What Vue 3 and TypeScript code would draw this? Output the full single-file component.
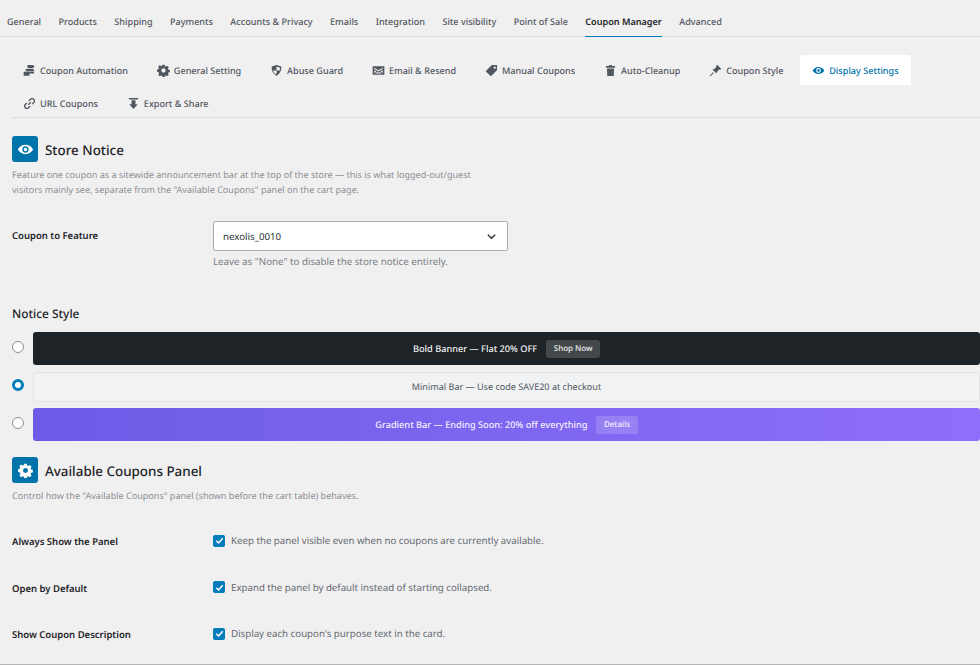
<script setup lang="ts">
const mainTabs = [
  'General', 'Products', 'Shipping', 'Payments', 'Accounts & Privacy', 'Emails',
  'Integration', 'Site visibility', 'Point of Sale', 'Coupon Manager', 'Advanced',
]

const gear =
  'M8.300 1h3.400l.5 2.400 1.500.6 2-1.300 2.400 2.400-1.300 2 .6 1.500 2.400.5v3.400l-2.400.5-.6 1.500 1.300 2-2.400 2.400-2-1.300-1.500.6-.5 2.400H8.300l-.5-2.400-1.500-.6-2 1.300-2.400-2.400 1.300-2-.6-1.500L0 11.700V8.300l2.400-.5.6-1.500-1.300-2 2.400-2.400 2 1.300 1.500-.6zM10 6.700a3.300 3.300 0 100 6.600 3.300 3.300 0 000-6.600z'
const eye =
  'M10 4.500c-4 0-7.200 2.400-9 5.500 1.800 3.100 5 5.500 9 5.500s7.200-2.400 9-5.500c-1.800-3.100-5-5.500-9-5.500zm0 9.200a3.700 3.700 0 110-7.400 3.700 3.700 0 010 7.400zm0-5.800a2.100 2.100 0 100 4.200 2.100 2.100 0 000-4.200z'

const subTabs = [
  { label: 'Coupon Automation', icon: 'M7 1.500h8l3 2.500-3 2.500H7zM4 7.500h12l1.500 3.500H4.500zM1 12h16v2.500H10V18H1z' },
  { label: 'General Setting', icon: gear },
  { label: 'Abuse Guard', icon: 'M10 1.500l7.500 2.500c0 6.500-2 11-7.500 14.500C4.500 15 2.500 10.500 2.500 4zm0 2.200V10H5c.4 2.700 2 5 5 6.300V10h5c.2-1.300.3-2.600.3-4.400z' },
  { label: 'Email & Resend', icon: 'M1 3.500h18v13H1zm2.500 2.300V7.500L10 11.500l6.500-4V5.800L10 9.700zm0 3.700v4.300L7 11.600zm13 0L13 11.600l3.500 2.200zM4.500 14.500h11L11.800 12.400 10 13.500l-1.800-1.100z' },
  { label: 'Manual Coupons', icon: 'M10.500 1.500H18.500v8L9 19 1 11zm4.500 2.200a1.800 1.800 0 100 3.600 1.800 1.800 0 000-3.600z' },
  { label: 'Auto-Cleanup', icon: 'M8 1.500h4l.5 1.500H17v2.800H3V3h4.500zM4.500 7h11L15 18.500H5z' },
  { label: 'Coupon Style', icon: 'M12.500 1l6.500 6.500-2 1.500-1.200-.5-3.300 3.300-.8 3-6.500-6.500 3-.8 3.300-3.300-.5-1.200zM6 12.500l1.500 1.500-5.500 5-1-1z' },
  { label: 'Display Settings', icon: eye, active: true },
  { label: 'URL Coupons', icon: 'M8 12l4-4M9 6l2.500-2.500a3.500 3.500 0 015 5L14 11M11 14l-2.500 2.500a3.500 3.500 0 01-5-5L6 9', line: true },
  { label: 'Export & Share', icon: 'M3 1.500h14v2.500H3zM7 5h6v6h3.500L10 18.500 3.500 11H7z' },
]

const notices = [
  { kind: 'bold', text: 'Bold Banner — Flat 20% OFF', action: 'Shop Now', checked: false },
  { kind: 'minimal', text: 'Minimal Bar — Use code SAVE20 at checkout', action: '', checked: true },
  { kind: 'gradient', text: 'Gradient Bar — Ending Soon: 20% off everything', action: 'Details', checked: false },
]

const panelRows = [
  { label: 'Always Show the Panel', text: 'Keep the panel visible even when no coupons are currently available.' },
  { label: 'Open by Default', text: 'Expand the panel by default instead of starting collapsed.' },
  { label: 'Show Coupon Description', text: "Display each coupon's purpose text in the card." },
]
</script>

<template>
  <div class="page">
    <nav class="main-tabs">
      <a v-for="tab in mainTabs" :key="tab" class="main-tab" :class="{ active: tab === 'Coupon Manager' }">{{ tab }}</a>
    </nav>

    <nav class="sub-tabs">
      <a v-for="tab in subTabs" :key="tab.label" class="sub-tab" :class="{ active: tab.active }">
        <svg viewBox="0 0 20 20" class="sub-icon" :class="{ line: tab.line }"><path :d="tab.icon" fill-rule="evenodd" /></svg>
        {{ tab.label }}
      </a>
    </nav>

    <section class="section">
      <header class="section-head">
        <span class="head-icon"><svg viewBox="0 0 20 20"><path :d="eye" fill-rule="evenodd" /></svg></span>
        <h2>Store Notice</h2>
      </header>
      <p class="desc">
        Feature one coupon as a sitewide announcement bar at the top of the store — this is what logged-out/guest<br />
        visitors mainly see, separate from the "Available Coupons" panel on the cart page.
      </p>

      <div class="feature-row">
        <label class="row-label">Coupon to Feature</label>
        <div>
          <div class="select">
            <span>nexolis_0010</span>
            <svg viewBox="0 0 12 12" class="chevron"><path d="M2 4l4 4 4-4" /></svg>
          </div>
          <p class="hint">Leave as "None" to disable the store notice entirely.</p>
        </div>
      </div>

      <h3 class="style-title">Notice Style</h3>
      <div class="notices">
        <div v-for="n in notices" :key="n.kind" class="notice-row">
          <span class="radio" :class="{ checked: n.checked }"></span>
          <div class="notice" :class="n.kind">
            <span>{{ n.text }}</span>
            <span v-if="n.action" class="notice-btn">{{ n.action }}</span>
          </div>
        </div>
      </div>
    </section>

    <section class="section panel">
      <header class="section-head">
        <span class="head-icon gear"><svg viewBox="0 0 20 20"><path :d="gear" fill-rule="evenodd" /></svg></span>
        <h2>Available Coupons Panel</h2>
      </header>
      <p class="desc">Control how the "Available Coupons" panel (shown before the cart table) behaves.</p>

      <div class="panel-rows">
        <div v-for="row in panelRows" :key="row.label" class="panel-row">
          <label class="row-label">{{ row.label }}</label>
          <div class="check-wrap">
            <span class="check">
              <svg viewBox="0 0 12 12"><path d="M2.500 6.200l2.500 2.500 4.500-5.200" /></svg>
            </span>
            <span class="check-text">{{ row.text }}</span>
          </div>
        </div>
      </div>
    </section>
  </div>
</template>

<style>
html,
body {
  margin: 0;
  background: #f0f0f1;
}
</style>

<style scoped>
.page {
  box-sizing: border-box;
  width: 980px;
  height: 665px;
  overflow: hidden;
  background: #f0f0f1;
  border-bottom: 1px solid #b5b5b5;
  font-family: "Noto Sans", "Open Sans", sans-serif;
  color: #3c434a;
  text-rendering: geometricPrecision;
}

.main-tabs {
  display: flex;
  gap: 17.400px;
  height: 37px;
  box-sizing: border-box;
  padding-left: 7px;
  border-bottom: 1px solid #dcdcde;
}

.main-tab {
  height: 37px;
  box-sizing: border-box;
  font-size: 9.100px;
  font-weight: 500;
  line-height: 43px;
  color: #50575e;
  white-space: nowrap;
}

.main-tab.active {
  color: #1d2327;
  font-weight: 600;
  border-bottom: 1px solid #007cba;
}

.sub-tabs {
  display: flex;
  flex-wrap: wrap;
  align-content: flex-start;
  column-gap: 4.800px;
  row-gap: 3px;
  margin: 18px 0 0 11px;
  height: 63px;
  box-sizing: border-box;
  border-bottom: 1px solid #dcdcde;
}

.sub-tab {
  display: flex;
  align-items: center;
  gap: 4px;
  height: 30px;
  padding: 0 12px;
  font-size: 9.100px;
  font-weight: 500;
  color: #50575e;
  white-space: nowrap;
  border-radius: 3px 3px 0 0;
}

.sub-tab.active {
  background: #fff;
  color: #0073aa;
}

.sub-icon {
  width: 13px;
  height: 13px;
  fill: currentColor;
}

.sub-icon.line {
  fill: none;
  stroke: currentColor;
  stroke-width: 2;
}

.section {
  padding-left: 12px;
}

.section-head {
  display: flex;
  align-items: center;
  gap: 7px;
  margin-top: 18px;
}

.head-icon {
  display: flex;
  align-items: center;
  justify-content: center;
  width: 26px;
  height: 26px;
  background: #0073aa;
  border-radius: 3px;
}

.head-icon svg {
  width: 17px;
  height: 17px;
  fill: #fff;
}

.head-icon.gear svg {
  width: 15px;
  height: 15px;
}

h2 {
  margin: 0;
  padding-top: 2px;
  font-size: 13.400px;
  font-weight: 500;
  color: #1d2327;
}

.desc {
  margin: 6px 0 0;
  font-size: 9.050px;
  line-height: 14.500px;
  color: #8c8f94;
}

.feature-row {
  display: flex;
  margin-top: 24px;
}

.row-label {
  width: 201px;
  flex: none;
  font-size: 9.500px;
  font-weight: 600;
  color: #1d2327;
}

.feature-row .row-label {
  padding-top: 8px;
}

.select {
  display: flex;
  align-items: center;
  justify-content: space-between;
  box-sizing: border-box;
  width: 295px;
  height: 30px;
  padding: 0 10px 0 9px;
  background: #fff;
  border: 1px solid #a7aaad;
  border-radius: 2px;
  font-size: 9.700px;
  color: #2c3338;
}

.chevron {
  width: 11px;
  height: 11px;
  fill: none;
  stroke: #2c3338;
  stroke-width: 1.600;
}

.hint {
  margin: 4px 0 0;
  font-size: 9.750px;
  line-height: 14px;
  color: #787c82;
}

.style-title {
  margin: 37px 0 0;
  font-size: 11.900px;
  font-weight: 500;
  line-height: 16px;
  color: #1d2327;
}

.notices {
  display: flex;
  flex-direction: column;
  gap: 6.500px;
  margin-top: 10px;
}

.notice-row {
  display: flex;
  align-items: center;
  gap: 9px;
}

.radio {
  flex: none;
  box-sizing: border-box;
  width: 12px;
  height: 12px;
  margin-top: -3px;
  background: #fff;
  border: 1px solid #8c8f94;
  border-radius: 50%;
}

.radio.checked {
  border: 3.500px solid #007cba;
}

.notice {
  display: flex;
  align-items: center;
  justify-content: center;
  gap: 9px;
  flex: 1;
  height: 33px;
  box-sizing: border-box;
  border-radius: 3px;
  font-size: 9.200px;
  font-weight: 500;
}

.notice.bold {
  background: #1d2327;
  color: #f0f0f1;
}

.notice.minimal {
  height: 30px;
  background: #f0f2f4;
  border: 1px solid #e4e4e5;
  color: #50575e;
  font-size: 9.070px;
  font-weight: 400;
}

.notice.gradient {
  background: linear-gradient(90deg, #6c5ce7, #8f6ff9);
  color: #f3f0ff;
}

.notice-btn {
  padding: 0 7.500px;
  height: 18px;
  line-height: 18px;
  border-radius: 3px;
  background: rgba(255, 255, 255, 0.17);
  font-size: 8px;
}

.panel .section-head {
  margin-top: 16px;
}

.panel-rows {
  margin-top: 15px;
}

.panel-row {
  display: flex;
  align-items: center;
  height: 46.500px;
}

.check-wrap {
  display: flex;
  align-items: center;
  gap: 6px;
  margin-top: -2px;
}

.check {
  display: flex;
  align-items: center;
  justify-content: center;
  width: 12px;
  height: 12px;
  background: #007cba;
  border-radius: 2px;
}

.check svg {
  width: 11px;
  height: 11px;
  fill: none;
  stroke: #fff;
  stroke-width: 1.700;
}

.check-text {
  font-size: 9.700px;
  color: #646970;
}
</style>
